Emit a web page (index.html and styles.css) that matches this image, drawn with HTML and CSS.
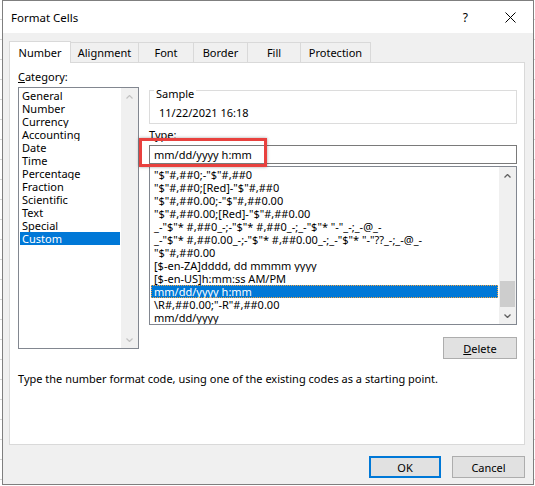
FILE: index.html
```html
<!DOCTYPE html>
<html>
<head>
<meta charset="utf-8">
<link rel="stylesheet" href="styles.css">
</head>
<body>
<div class="dialog">
  <div class="titlebar">
    <span class="title">Format Cells</span>
    <span class="help">?</span>
    <svg class="close" width="11" height="11" viewBox="0 0 11 11"><path d="M0.5 0.5 L10.5 10.5 M10.5 0.5 L0.5 10.5" stroke="#000" stroke-width="1" fill="none"/></svg>
  </div>
  <div class="body">
    <div class="tabs">
      <div class="tab active t-number">Number</div>
      <div class="tab t-align">Alignment</div>
      <div class="tab t-font">Font</div>
      <div class="tab t-border">Border</div>
      <div class="tab t-fill">Fill</div>
      <div class="tab t-prot">Protection</div>
    </div>
    <div class="panel">
      <div class="cols">
        <div class="leftcol">
          <div class="label cat-label"><u>C</u>ategory:</div>
          <div class="listbox cat">
            <div class="items">
              <div class="row">General</div>
              <div class="row">Number</div>
              <div class="row">Currency</div>
              <div class="row">Accounting</div>
              <div class="row">Date</div>
              <div class="row">Time</div>
              <div class="row">Percentage</div>
              <div class="row">Fraction</div>
              <div class="row">Scientific</div>
              <div class="row">Text</div>
              <div class="row">Special</div>
              <div class="row sel">Custom</div>
            </div>
            <div class="vscroll disabled">
              <div class="arrow"><svg width="7" height="4" viewBox="0 0 7 4"><path d="M0.5 3.5 L3.5 0.5 L6.5 3.5" fill="none" stroke="#c2c2c2" stroke-width="1.2"/></svg></div>
              <div class="spacer"></div>
              <div class="arrow"><svg width="7" height="4" viewBox="0 0 7 4"><path d="M0.5 0.5 L3.5 3.5 L6.5 0.5" fill="none" stroke="#c2c2c2" stroke-width="1.2"/></svg></div>
            </div>
          </div>
        </div>
        <div class="rightcol">
          <div class="group">
            <div class="group-title">Sample</div>
            <div class="sample">11/22/2021 16:18</div>
          </div>
          <div class="label type-label"><u>T</u>ype:</div>
          <div class="input">mm/dd/yyyy h:mm</div>
          <div class="listbox fmt">
            <div class="items">
              <div class="row">"$"#,##0;-"$"#,##0</div>
              <div class="row">"$"#,##0;[Red]-"$"#,##0</div>
              <div class="row">"$"#,##0.00;-"$"#,##0.00</div>
              <div class="row">"$"#,##0.00;[Red]-"$"#,##0.00</div>
              <div class="row">_-"$"* #,##0_-;-"$"* #,##0_-;_-"$"* "-"_-;_-@_-</div>
              <div class="row">_-"$"* #,##0.00_-;-"$"* #,##0.00_-;_-"$"* "-"??_-;_-@_-</div>
              <div class="row">"$"#,##0.00</div>
              <div class="row">[$-en-ZA]dddd, dd mmmm yyyy</div>
              <div class="row">[$-en-US]h:mm:ss AM/PM</div>
              <div class="row sel focus">mm/dd/yyyy h:mm</div>
              <div class="row">\R#,##0.00;"-R"#,##0.00</div>
              <div class="row">mm/dd/yyyy</div>
            </div>
            <div class="vscroll">
              <div class="arrow"><svg width="7" height="4" viewBox="0 0 7 4"><path d="M0.5 3.5 L3.5 0.5 L6.5 3.5" fill="none" stroke="#606060" stroke-width="1.3"/></svg></div>
              <div class="spacer"></div>
              <div class="thumb"></div>
              <div class="arrow"><svg width="7" height="4" viewBox="0 0 7 4"><path d="M0.5 0.5 L3.5 3.5 L6.5 0.5" fill="none" stroke="#606060" stroke-width="1.3"/></svg></div>
            </div>
          </div>
          <div class="btnrow"><button class="btn delete"><u>D</u>elete</button></div>
          <div class="highlight"></div>
        </div>
      </div>
      <div class="desc">Type the number format code, using one of the existing codes as a starting point.</div>
    </div>
    <div class="footer">
      <button class="btn ok">OK</button>
      <button class="btn cancel">Cancel</button>
    </div>
  </div>
</div>
</body>
</html>
```

FILE: styles.css
```css
html, body {
  margin: 0;
  padding: 0;
}
body {
  width: 535px;
  height: 486px;
  overflow: hidden;
  background: #ffffff repeating-linear-gradient(to bottom, transparent 0 19px, #d4d4d4 19px 20px);
  font-family: "Noto Sans", "Open Sans", sans-serif;
  font-size: 11px;
  color: #000;
}
.dialog {
  margin-left: 2px;
  width: 532px;
  height: 485px;
  box-sizing: border-box;
  border: 1px solid #7f7f7f;
  background: #f0f0f0;
  display: flex;
  flex-direction: column;
}
.titlebar {
  height: 32px;
  flex: none;
  background: #fff;
  display: flex;
  align-items: center;
  padding-left: 8px;
}
.title {
  flex: 1;
  font-size: 11.5px;
}
.help {
  margin-right: 37px;
  font-size: 12px;
}
.close {
  margin-right: 17px;
}
.body {
  flex: 1;
  display: flex;
  flex-direction: column;
  padding: 8px 8px 6px 6px;
}
.tabs {
  display: flex;
  align-items: flex-end;
  height: 21px;
  flex: none;
}
.tab {
  height: 20px;
  box-sizing: border-box;
  border: 1px solid #d9d9d9;
  border-bottom: none;
  margin-left: -1px;
  background: #f0f0f0;
  display: flex;
  align-items: center;
  justify-content: center;
}
.tab.active {
  height: 22px;
  margin-left: 0;
  margin-bottom: -1px;
  background: #fff;
  position: relative;
  z-index: 1;
}
.t-number { width: 62px; }
.t-align { width: 69px; }
.t-font { width: 56px; }
.t-border { width: 55px; }
.t-fill { width: 54px; }
.t-prot { width: 71px; }
.panel {
  height: 383px;
  flex: none;
  box-sizing: border-box;
  border: 1px solid #d9d9d9;
  background: #fff;
  padding: 7px 7px 0 8px;
}
.cols {
  display: grid;
  grid-template-columns: 121px 368px;
  column-gap: 10px;
  align-items: start;
}
.label {
  line-height: 14px;
  height: 14px;
}
.cat-label {
  margin-bottom: 3px;
}
.listbox {
  box-sizing: border-box;
  border: 1px solid #828790;
  background: #fff;
  display: flex;
}
.cat {
  height: 262px;
}
.items {
  flex: 1;
  min-width: 0;
  padding: 1px;
}
.row {
  height: 13px;
  line-height: 13px;
  padding-left: 2px;
  white-space: nowrap;
  overflow: hidden;
}
.fmt .row {
  padding-left: 3px;
}
.row.sel {
  background: #0078d7;
  color: #fff;
}
.row.focus {
  outline: 1px dotted #f2a443;
  outline-offset: -1px;
}
.vscroll {
  width: 17px;
  flex: none;
  background: #f0f0f0;
  display: flex;
  flex-direction: column;
}
.arrow {
  height: 17px;
  flex: none;
  display: flex;
  align-items: center;
  justify-content: center;
}
.arrow svg {
  display: block;
}
.spacer {
  flex: 1;
}
.thumb {
  height: 26px;
  flex: none;
  margin: 0 1px;
  background: #cdcdcd;
}
.rightcol {
  position: relative;
}
.group {
  margin-top: 20px;
  height: 34px;
  box-sizing: border-box;
  border: 1px solid #dcdcdc;
}
.group-title {
  width: max-content;
  margin: -4px 0 0 4px;
  padding: 0 2px;
  background: #fff;
  line-height: 14px;
}
.sample {
  margin: 5px 0 0 9px;
  line-height: 14px;
}
.type-label {
  margin-top: 4px;
}
.input {
  margin-top: 3px;
  height: 19px;
  box-sizing: border-box;
  border: 1px solid #7a7a7a;
  padding-left: 4px;
  line-height: 17px;
}
.fmt {
  margin-top: 2px;
  height: 159px;
}
.btnrow {
  margin-top: 12px;
  display: flex;
  justify-content: flex-end;
}
.btn {
  height: 22px;
  box-sizing: border-box;
  border: 1px solid #adadad;
  background: #e1e1e1;
  font-family: inherit;
  font-size: 11px;
  color: #000;
  padding: 0;
  margin: 0;
}
.delete {
  width: 74px;
}
.highlight {
  position: absolute;
  left: -10px;
  top: 68px;
  width: 128px;
  height: 29px;
  box-sizing: border-box;
  border: 3px solid #e8413e;
  box-shadow: 0 0 3px rgba(0, 0, 0, 0.35);
}
.desc {
  margin-top: 13px;
  line-height: 14px;
}
.footer {
  margin-top: 11px;
  display: flex;
  justify-content: flex-end;
  gap: 11px;
}
.ok {
  width: 72px;
  border: 2px solid #0078d7;
}
.cancel {
  width: 73px;
}
```
